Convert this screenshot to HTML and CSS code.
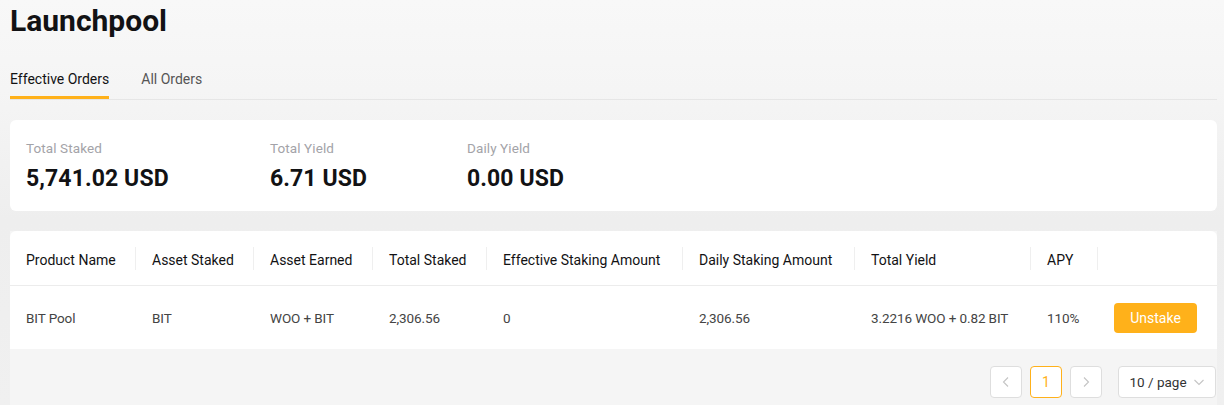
FILE: index.html
```html
<!DOCTYPE html>
<html>
<head>
<meta charset="utf-8">
<link rel="stylesheet" href="styles.css">
</head>
<body>
<div class="page">
  <h1 class="title">Launchpool</h1>
  <div class="tabs">
    <div class="tab active">Effective Orders</div>
    <div class="tab">All Orders</div>
  </div>
  <div class="summary">
    <div class="stat s1">
      <div class="label">Total Staked</div>
      <div class="value">5,741.02 USD</div>
    </div>
    <div class="stat s2">
      <div class="label">Total Yield</div>
      <div class="value">6.71 USD</div>
    </div>
    <div class="stat s3">
      <div class="label">Daily Yield</div>
      <div class="value">0.00 USD</div>
    </div>
  </div>
  <div class="table-wrap">
    <table class="orders">
      <colgroup>
        <col class="c1"><col class="c2"><col class="c3"><col class="c4"><col class="c5"><col class="c6"><col class="c7"><col class="c8"><col class="c9">
      </colgroup>
      <thead>
        <tr>
          <th>Product Name</th>
          <th>Asset Staked</th>
          <th>Asset Earned</th>
          <th>Total Staked</th>
          <th>Effective Staking Amount</th>
          <th>Daily Staking Amount</th>
          <th>Total Yield</th>
          <th>APY</th>
          <th></th>
        </tr>
      </thead>
      <tbody>
        <tr>
          <td>BIT Pool</td>
          <td>BIT</td>
          <td>WOO + BIT</td>
          <td>2,306.56</td>
          <td>0</td>
          <td>2,306.56</td>
          <td>3.2216 WOO + 0.82 BIT</td>
          <td>110%</td>
          <td><button class="unstake">Unstake</button></td>
        </tr>
      </tbody>
    </table>
    <div class="pager">
      <div class="pbox arrow"><svg width="12" height="12" viewBox="0 0 12 12"><path d="M8 1.5 L3.5 6 L8 10.5" fill="none" stroke="#c4c4c4" stroke-width="1.1"/></svg></div>
      <div class="pbox current">1</div>
      <div class="pbox arrow"><svg width="12" height="12" viewBox="0 0 12 12"><path d="M4 1.5 L8.5 6 L4 10.5" fill="none" stroke="#c4c4c4" stroke-width="1.1"/></svg></div>
      <div class="psize">10 / page <svg width="12" height="12" viewBox="0 0 12 12"><path d="M1.5 4 L6 8.5 L10.5 4" fill="none" stroke="#c4c4c4" stroke-width="1.1"/></svg></div>
    </div>
  </div>
</div>
</body>
</html>
```

FILE: styles.css
```css
html, body {
  margin: 0;
  padding: 0;
}
body {
  width: 1224px;
  height: 405px;
  overflow: hidden;
  font-family: Roboto, "Liberation Sans", sans-serif;
  color: #121214;
  background: linear-gradient(180deg, #f8f8f8 0px, #f5f5f5 90px, #eeeeee 220px, #f0f0f0 405px);
}
.page {
  padding: 0 7px 0 10px;
}
.title {
  margin: 0;
  padding-top: 2px;
  font-size: 30px;
  line-height: 37px;
  font-weight: 700;
  color: #121214;
  letter-spacing: 0;
}
.tabs {
  display: flex;
  gap: 32px;
  margin-top: 20px;
  border-bottom: 1px solid #e6e6e6;
  height: 40px;
}
.tab {
  font-size: 14px;
  padding-top: 3px;
  line-height: 34px;
  color: #555;
}
.tab.active {
  color: #121214;
  border-bottom: 3px solid #ffb11a;
  height: 34px;
  margin-bottom: -1px;
}
.summary {
  margin-top: 20px;
  background: #fff;
  border-radius: 6px;
  height: 91px;
  display: flex;
  padding-left: 16px;
  box-sizing: border-box;
}
.stat {
  padding-top: 19px;
}
.s1 { width: 244px; }
.s2 { width: 197px; }
.label {
  font-size: 13.5px;
  line-height: 18px;
  color: #a3a3a8;
  letter-spacing: 0.1px;
}
.value {
  margin-top: 9px;
  font-size: 23px;
  line-height: 25px;
  font-weight: 700;
  color: #121214;
  letter-spacing: 0.1px;
}
.table-wrap {
  margin-top: 20px;
  background: #f5f5f5;
  height: 174px;
}
.orders {
  width: 100%;
  border-collapse: collapse;
  table-layout: fixed;
  background: #fff;
  border-radius: 6px 6px 0 0;
}
.c1 { width: 126px; }
.c2 { width: 118px; }
.c3 { width: 119px; }
.c4 { width: 114px; }
.c5 { width: 196px; }
.c6 { width: 172px; }
.c7 { width: 176px; }
.c8 { width: 67px; }
.c9 { width: 119px; }
.orders th {
  position: relative;
  text-align: left;
  font-weight: 400;
  font-size: 14px;
  color: #121214;
  height: 51px;
  padding: 3px 0 0 16px;
  border-bottom: 1px solid #ececec;
  white-space: nowrap;
}
.orders th:first-child { border-top-left-radius: 6px; }
.orders th:last-child { border-top-right-radius: 6px; }
.orders th + th::before {
  content: "";
  position: absolute;
  left: -1px;
  top: 16px;
  height: 23px;
  width: 1px;
  background: #efefef;
}
.orders td {
  height: 62px;
  padding: 1px 0 0 16px;
  font-size: 13.5px;
  color: #444;
  white-space: nowrap;
  letter-spacing: -0.1px;
}
.unstake {
  width: 83px;
  height: 30px;
  border: 0;
  border-radius: 4px;
  background: #ffb11a;
  color: #fff;
  font-family: inherit;
  font-size: 14px;
  padding: 0;
  margin-top: 0;
}
.pager {
  display: flex;
  justify-content: flex-end;
  align-items: center;
  margin-top: 17px;
  padding-right: 1px;
  gap: 8px;
}
.pbox {
  width: 30px;
  height: 30px;
  border: 1px solid #dedede;
  border-radius: 4px;
  background: #fff;
  display: flex;
  align-items: center;
  justify-content: center;
  font-size: 14px;
  box-sizing: content-box;
}
.pbox.current {
  border-color: #ffb11a;
  color: #ffb11a;
}
.psize {
  margin-left: 8px;
  width: 96px;
  height: 30px;
  border: 1px solid #dedede;
  border-radius: 4px;
  background: #fff;
  display: flex;
  align-items: center;
  justify-content: center;
  gap: 6px;
  font-size: 13.5px;
  color: #333;
  box-sizing: content-box;
}
```
